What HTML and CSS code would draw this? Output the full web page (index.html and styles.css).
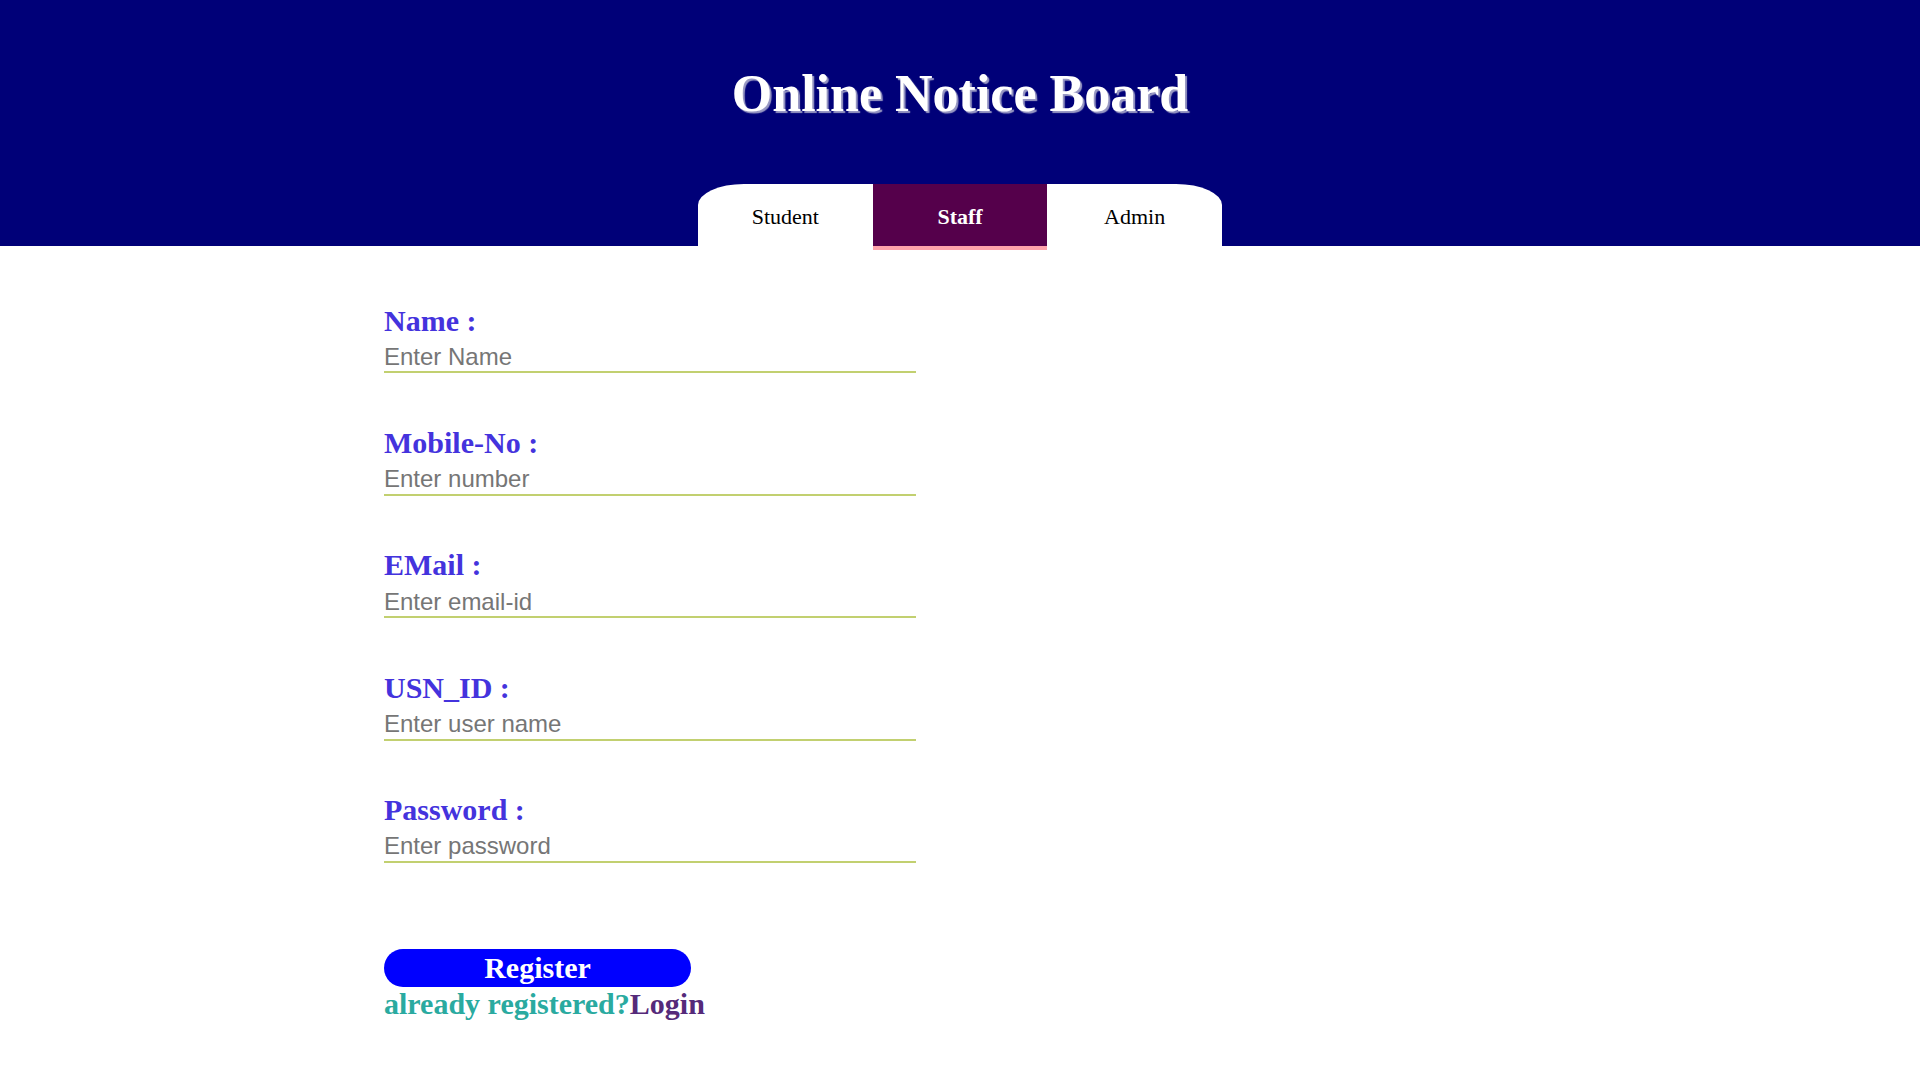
FILE: index.html
```html
<!DOCTYPE html>
<html>
<head>
<meta charset="utf-8">
<title>Online Notice Board</title>
<link rel="stylesheet" href="styles.css">
</head>
<body>
<header class="header">
  <h1 class="title">Online Notice Board</h1>
  <nav class="tabs">
    <a class="tab tab-left">Student</a>
    <a class="tab tab-active">Staff</a>
    <a class="tab tab-right">Admin</a>
  </nav>
</header>
<main class="content">
  <form class="form">
    <div class="field">
      <label class="label">Name :</label>
      <input class="input" type="text" placeholder="Enter Name">
    </div>
    <div class="field">
      <label class="label">Mobile-No :</label>
      <input class="input" type="text" placeholder="Enter number">
    </div>
    <div class="field">
      <label class="label">EMail :</label>
      <input class="input" type="text" placeholder="Enter email-id">
    </div>
    <div class="field">
      <label class="label">USN_ID :</label>
      <input class="input" type="text" placeholder="Enter user name">
    </div>
    <div class="field">
      <label class="label">Password :</label>
      <input class="input" type="password" placeholder="Enter password">
    </div>
    <button class="register" type="button">Register</button>
    <p class="login-line"><span class="already">already registered?</span><a class="login">Login</a></p>
  </form>
</main>
</body>
</html>
```
FILE: styles.css
```css
html, body {
  margin: 0;
  padding: 0;
  background: #ffffff;
}

body {
  font-family: "Liberation Serif", "Times New Roman", serif;
}

.header {
  background: #000078;
  height: 246px;
  box-sizing: border-box;
  padding-top: 64px;
  display: flex;
  flex-direction: column;
  align-items: center;
}

.title {
  margin: 0 0 60px 0;
  font-family: "Liberation Serif", serif;
  font-weight: bold;
  font-size: 52px;
  line-height: 60px;
  color: #ffffff;
  text-shadow: 2px 2px 1px #9a9ac4;
}

.tabs {
  display: flex;
  height: 62px;
}

.tab {
  width: 174.67px;
  height: 62px;
  box-sizing: border-box;
  padding-top: 4.5px;
  background: #ffffff;
  color: #000000;
  font-family: "Liberation Serif", serif;
  font-size: 22px;
  line-height: 56px;
  text-align: center;
}

.tab-left {
  border-top-left-radius: 46px 21px;
}

.tab-right {
  border-top-right-radius: 46px 21px;
}

.tab-active {
  background: #55004b;
  color: #ffffff;
  font-weight: bold;
  box-shadow: 0 4px 0 #ffa3ab;
}

.content {
  padding: 57.5px 0 0 384px;
}

.form {
  width: 532px;
  margin: 0;
}

.field {
  margin-bottom: 52.45px;
}

.label {
  display: block;
  font-family: "Liberation Serif", serif;
  font-weight: bold;
  font-size: 30px;
  line-height: 34px;
  color: #4433dd;
  margin-bottom: 4.4px;
}

.input {
  display: block;
  width: 100%;
  box-sizing: content-box;
  height: 29.6px;
  padding: 0;
  margin: 0;
  border: none;
  border-bottom: 2px solid #c2d070;
  outline: none;
  background: transparent;
  font-family: "Liberation Sans", Arial, sans-serif;
  font-size: 24px;
  color: #333333;
}

.input::placeholder {
  color: #767676;
  opacity: 1;
}

.register {
  display: block;
  margin-top: 85.7px;
  width: 307px;
  height: 38px;
  padding: 0;
  border: none;
  border-radius: 19px;
  background: #0000ff;
  color: #ffffff;
  font-family: "Liberation Serif", serif;
  font-weight: bold;
  font-size: 30px;
  line-height: 34px;
}

.login-line {
  margin: 0;
  font-family: "Liberation Serif", serif;
  font-weight: bold;
  font-size: 30px;
  line-height: 34px;
}

.already {
  color: #2aaaa0;
}

.login {
  color: #552a7a;
}
```
